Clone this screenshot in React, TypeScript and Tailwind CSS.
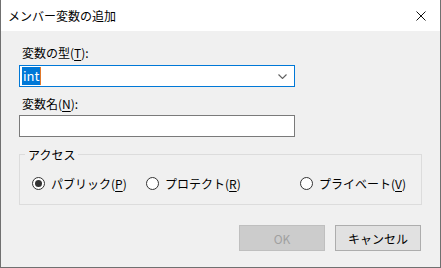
const font = { fontFamily: '"Noto Sans CJK JP", "Liberation Sans", sans-serif' };

const Mn = ({ c }: { c: string }) => <span className="underline underline-offset-2">{c}</span>;

const Radio = ({ checked, label, mn, width }: { checked?: boolean; label: string; mn: string; width: string }) => (
  <div className={`flex items-center gap-[6px] ${width}`}>
    <span className="w-[13px] h-[13px] rounded-full border border-[#333333] bg-white flex items-center justify-center">
      {checked && <span className="w-[7px] h-[7px] rounded-full bg-[#333333]" />}
    </span>
    <span>
      {label}(<Mn c={mn} />)
    </span>
  </div>
);

export default function App() {
  return (
    <div
      style={font}
      className="w-[441px] h-[268px] flex flex-col bg-[#f0f0f0] border-x border-b border-[#707070] text-[12px] leading-[15px] text-black"
    >
      {/* title bar */}
      <div className="h-[31px] bg-white flex items-center justify-between pl-[7px] pr-[10px] shrink-0">
        <span>メンバー変数の追加</span>
        <svg width="10" height="10" viewBox="0 0 10 10" className="mr-[4px]">
          <path d="M0.5 0.5 L9.5 9.5 M9.5 0.5 L0.5 9.5" stroke="#111" strokeWidth="1" fill="none" />
        </svg>
      </div>

      <div className="flex flex-col pl-[18px] pr-[19px] pt-[14px]">
        <div className="pl-[3px]">
          変数の型(<Mn c="T" />):
        </div>
        <div className="mt-[5px] w-[276px] h-[22px] bg-white border border-[#0078d7] flex items-center pl-[2px] pr-[7px]">
          <span className="bg-[#0078d7] text-white px-[1px] h-[18px] leading-[18px] text-[13px]">int</span>
          <span className="w-[1px] h-[18px] bg-[#e0782a]" />
          <svg width="9" height="5" viewBox="0 0 9 5" className="ml-auto">
            <path d="M0.5 0.5 L4.5 4.5 L8.5 0.5" stroke="#606060" strokeWidth="1.1" fill="none" />
          </svg>
        </div>

        <div className="mt-[9px] pl-[3px]">
          変数名(<Mn c="N" />):
        </div>
        <div className="mt-[4px] w-[276px] h-[22px] bg-white border border-[#7a7a7a]" />

        <fieldset className="mt-[10px] w-[403px] border border-[#dcdcdc] pb-[13px]">
          <legend className="ml-[5px] px-[3px]">アクセス</legend>
          <div className="flex items-center mt-[14px] pl-[12px]">
            <Radio checked label="パブリック" mn="P" width="w-[114px]" />
            <Radio label="プロテクト" mn="R" width="w-[154px]" />
            <Radio label="プライベート" mn="V" width="w-[114px]" />
          </div>
        </fieldset>

        <div className="mt-[20px] flex justify-end gap-[10px]">
          <button className="w-[86px] h-[26px] bg-[#cccccc] border border-[#bfbfbf] text-[#a0a0a0]">OK</button>
          <button className="w-[86px] h-[26px] bg-[#e1e1e1] border border-[#adadad]">キャンセル</button>
        </div>
      </div>
    </div>
  );
}
